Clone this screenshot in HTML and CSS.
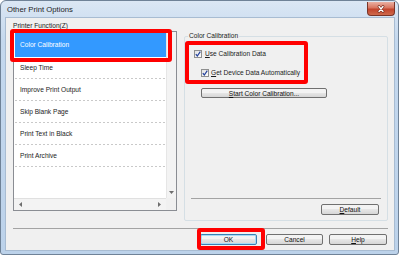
FILE: index.html
```html
<!DOCTYPE html>
<html lang="en">

<head>
  <meta charset="UTF-8">
  <title>Other Print Options</title>
  <link rel="stylesheet" href="styles.css">
</head>

<body>
  <div class="window">
    <div class="titlebar">
      <span class="title">Other Print Options</span>
      <span class="close">
        <svg width="10" height="8" viewBox="0 0 10 8">
          <path d="M3 1.5 L7 6.5 M7 1.5 L3 6.5" stroke="#6b2417" stroke-width="2.6" stroke-linecap="round" />
          <path d="M3 1.5 L7 6.5 M7 1.5 L3 6.5" stroke="#fff" stroke-width="1.4" stroke-linecap="round" />
        </svg>
      </span>
    </div>

    <div class="client">
      <div class="main">
        <div class="functions">
          <div class="caption">Printer Function(<u>Z</u>)</div>
          <div class="listbox">
            <ul class="items">
              <li class="selected">Color Calibration</li>
              <li>Sleep Time</li>
              <li>Improve Print Output</li>
              <li>Skip Blank Page</li>
              <li>Print Text in Black</li>
              <li>Print Archive</li>
            </ul>
            <div class="vscroll">
              <svg width="5" height="3" viewBox="0 0 5 3"><path d="M0 0 H5 L2.5 3 Z" fill="#6d6d6d" /></svg>
            </div>
            <div class="hscroll">
              <svg width="3" height="5" viewBox="0 0 3 5"><path d="M3 0 V5 L0 2.5 Z" fill="#6d6d6d" /></svg>
              <svg width="3" height="5" viewBox="0 0 3 5"><path d="M0 0 V5 L3 2.5 Z" fill="#6d6d6d" /></svg>
            </div>
            <div class="corner"></div>
          </div>
        </div>

        <div class="group">
          <div class="group-title">Color Calibration</div>
          <label class="check">
            <span class="box"><svg width="6" height="6" viewBox="0 0 6 6"><path d="M0.8 3.2 L2.3 5 L5.3 0.6" fill="none" stroke="#23419b" stroke-width="1.2" /></svg></span>
            <span><u>U</u>se Calibration Data</span>
          </label>
          <label class="check sub">
            <span class="box"><svg width="6" height="6" viewBox="0 0 6 6"><path d="M0.8 3.2 L2.3 5 L5.3 0.6" fill="none" stroke="#23419b" stroke-width="1.2" /></svg></span>
            <span><u>G</u>et Device Data Automatically</span>
          </label>
          <button class="btn start"><u>S</u>tart Color Calibration...</button>
          <div class="spacer"></div>
          <div class="rule inner"></div>
          <div class="group-footer">
            <button class="btn"><u>D</u>efault</button>
          </div>
        </div>
      </div>

      <div class="rule outer"></div>
      <div class="actions">
        <button class="btn ok">OK</button>
        <button class="btn">Cancel</button>
        <button class="btn help"><u>H</u>elp</button>
      </div>

      <div class="mark mark-list"></div>
      <div class="mark mark-checks"></div>
      <div class="mark mark-ok"></div>
    </div>
  </div>
</body>

</html>
```

FILE: styles.css
```css
* {
  box-sizing: border-box;
}

body {
  margin: 0;
  background-color: #fff;
  font-family: 'Liberation Sans', Arial, sans-serif;
  font-size: 6.6px;
  color: #1b1b1b;
}

u {
  text-decoration-thickness: 0.5px;
}

.window {
  width: 399px;
  height: 255px;
  border: 1px solid #6f8297;
  border-radius: 6px 6px 3px 3px;
  background: linear-gradient(#dbe7f4, #c4d8ee 40px, #bcd2ea);
  padding: 0 3px 3px 4px;
  display: flex;
  flex-direction: column;
}

.titlebar {
  height: 16px;
  flex: none;
  display: flex;
  justify-content: space-between;
  align-items: center;
}

.title {
  margin-left: 2px;
  font-size: 7.7px;
  color: #1e1e1e;
}

.close {
  align-self: flex-start;
  width: 28px;
  height: 14px;
  margin-top: 1px;
  border: 1px solid #7a3427;
  border-top: none;
  border-radius: 0 0 4px 4px;
  background: linear-gradient(#eab0a2, #d9755f 45%, #c2442c 55%, #cf6a4c);
  display: flex;
  justify-content: center;
  align-items: center;
}

.client {
  flex: 1;
  position: relative;
  border: 1px solid #a8bcd2;
  background-color: #f0f0f0;
  display: flex;
  flex-direction: column;
}

.main {
  display: flex;
  padding: 2px 6px 0 7px;
}

.functions {
  width: 164px;
  display: flex;
  flex-direction: column;
}

.caption {
  height: 11px;
  line-height: 11px;
}

.listbox {
  height: 180px;
  border: 1px solid #8a8d93;
  background-color: #fff;
  display: grid;
  grid-template-columns: 1fr 10px;
  grid-template-rows: 1fr 12px;
}

.items {
  list-style: none;
  margin: 0;
  padding: 1px 0 0 1px;
}

.items li {
  height: 22px;
  line-height: 21px;
  padding-left: 5px;
  background: linear-gradient(to right, #c9c9c9 50%, transparent 50%) left bottom / 4px 1px repeat-x;
}

.items li.selected {
  height: 24px;
  line-height: 24px;
  background: #3399ff;
  color: #fff;
}

.vscroll {
  background-color: #f3f3f3;
  border-left: 1px solid #e6e6e6;
  display: flex;
  flex-direction: column;
  justify-content: flex-end;
  align-items: center;
  padding-bottom: 4px;
}

.hscroll {
  background-color: #f3f3f3;
  border-top: 1px solid #e0e0e0;
  display: flex;
  justify-content: space-between;
  align-items: center;
  padding: 0 5px;
}

.corner {
  background-color: #f0f0f0;
}

.group {
  flex: 1;
  height: 185px;
  margin: 16px 0 0 7px;
  border: 1px solid #d5dfe5;
  border-radius: 2px;
  padding: 0 0 5px 9px;
  display: flex;
  flex-direction: column;
  align-items: flex-start;
}

.group-title {
  margin: -6px 0 0 -6px;
  padding: 0 1px;
  line-height: 9px;
  background-color: #f0f0f0;
}

.check {
  display: flex;
  align-items: center;
  gap: 3px;
  height: 9px;
  margin-top: 9px;
}

.check.sub {
  margin: 10px 0 0 7px;
  gap: 2px;
}

.box {
  width: 8px;
  height: 8px;
  border: 1px solid #8e8f8f;
  background: linear-gradient(135deg, #e2e2e2, #fdfdfd);
  display: flex;
  justify-content: center;
  align-items: center;
}

.btn {
  height: 11px;
  padding: 0;
  border: 1px solid #707070;
  border-radius: 2px;
  background: linear-gradient(#f3f3f3 0 45%, #e6e6e6 50%, #d6d6d6);
  font-family: inherit;
  font-size: 6.6px;
  line-height: 9px;
  color: #111;
}

.start {
  width: 126px;
  height: 10px;
  margin: 11px 0 0 7px;
}

.spacer {
  flex: 1;
}

.rule {
  height: 1px;
  background-color: #a3a3a3;
}

.rule.inner {
  align-self: stretch;
  margin: 0 6px 0 -3px;
}

.group-footer {
  align-self: stretch;
  display: flex;
  justify-content: flex-end;
  margin: 5px 8px 0 0;
}

.group-footer .btn {
  width: 58px;
}

.rule.outer {
  margin: 7px 6px 0 7px;
}

.actions {
  display: flex;
  justify-content: flex-end;
  gap: 6px;
  margin-top: 5px;
  padding-right: 7px;
}

.actions .btn {
  width: 57px;
}

.actions .ok {
  margin-right: 3px;
  border-color: #3c7fb1;
  box-shadow: inset 0 0 0 1px #a6dcf7;
}

.actions .help {
  width: 58px;
}

.mark {
  position: absolute;
  border: 4px solid #ff0000;
  border-radius: 3px;
}

.mark-list {
  left: 4px;
  top: 11px;
  width: 162px;
  height: 33px;
}

.mark-checks {
  left: 179px;
  top: 23px;
  width: 123px;
  height: 43px;
}

.mark-ok {
  left: 191px;
  top: 210px;
  width: 68px;
  height: 22px;
}
```
